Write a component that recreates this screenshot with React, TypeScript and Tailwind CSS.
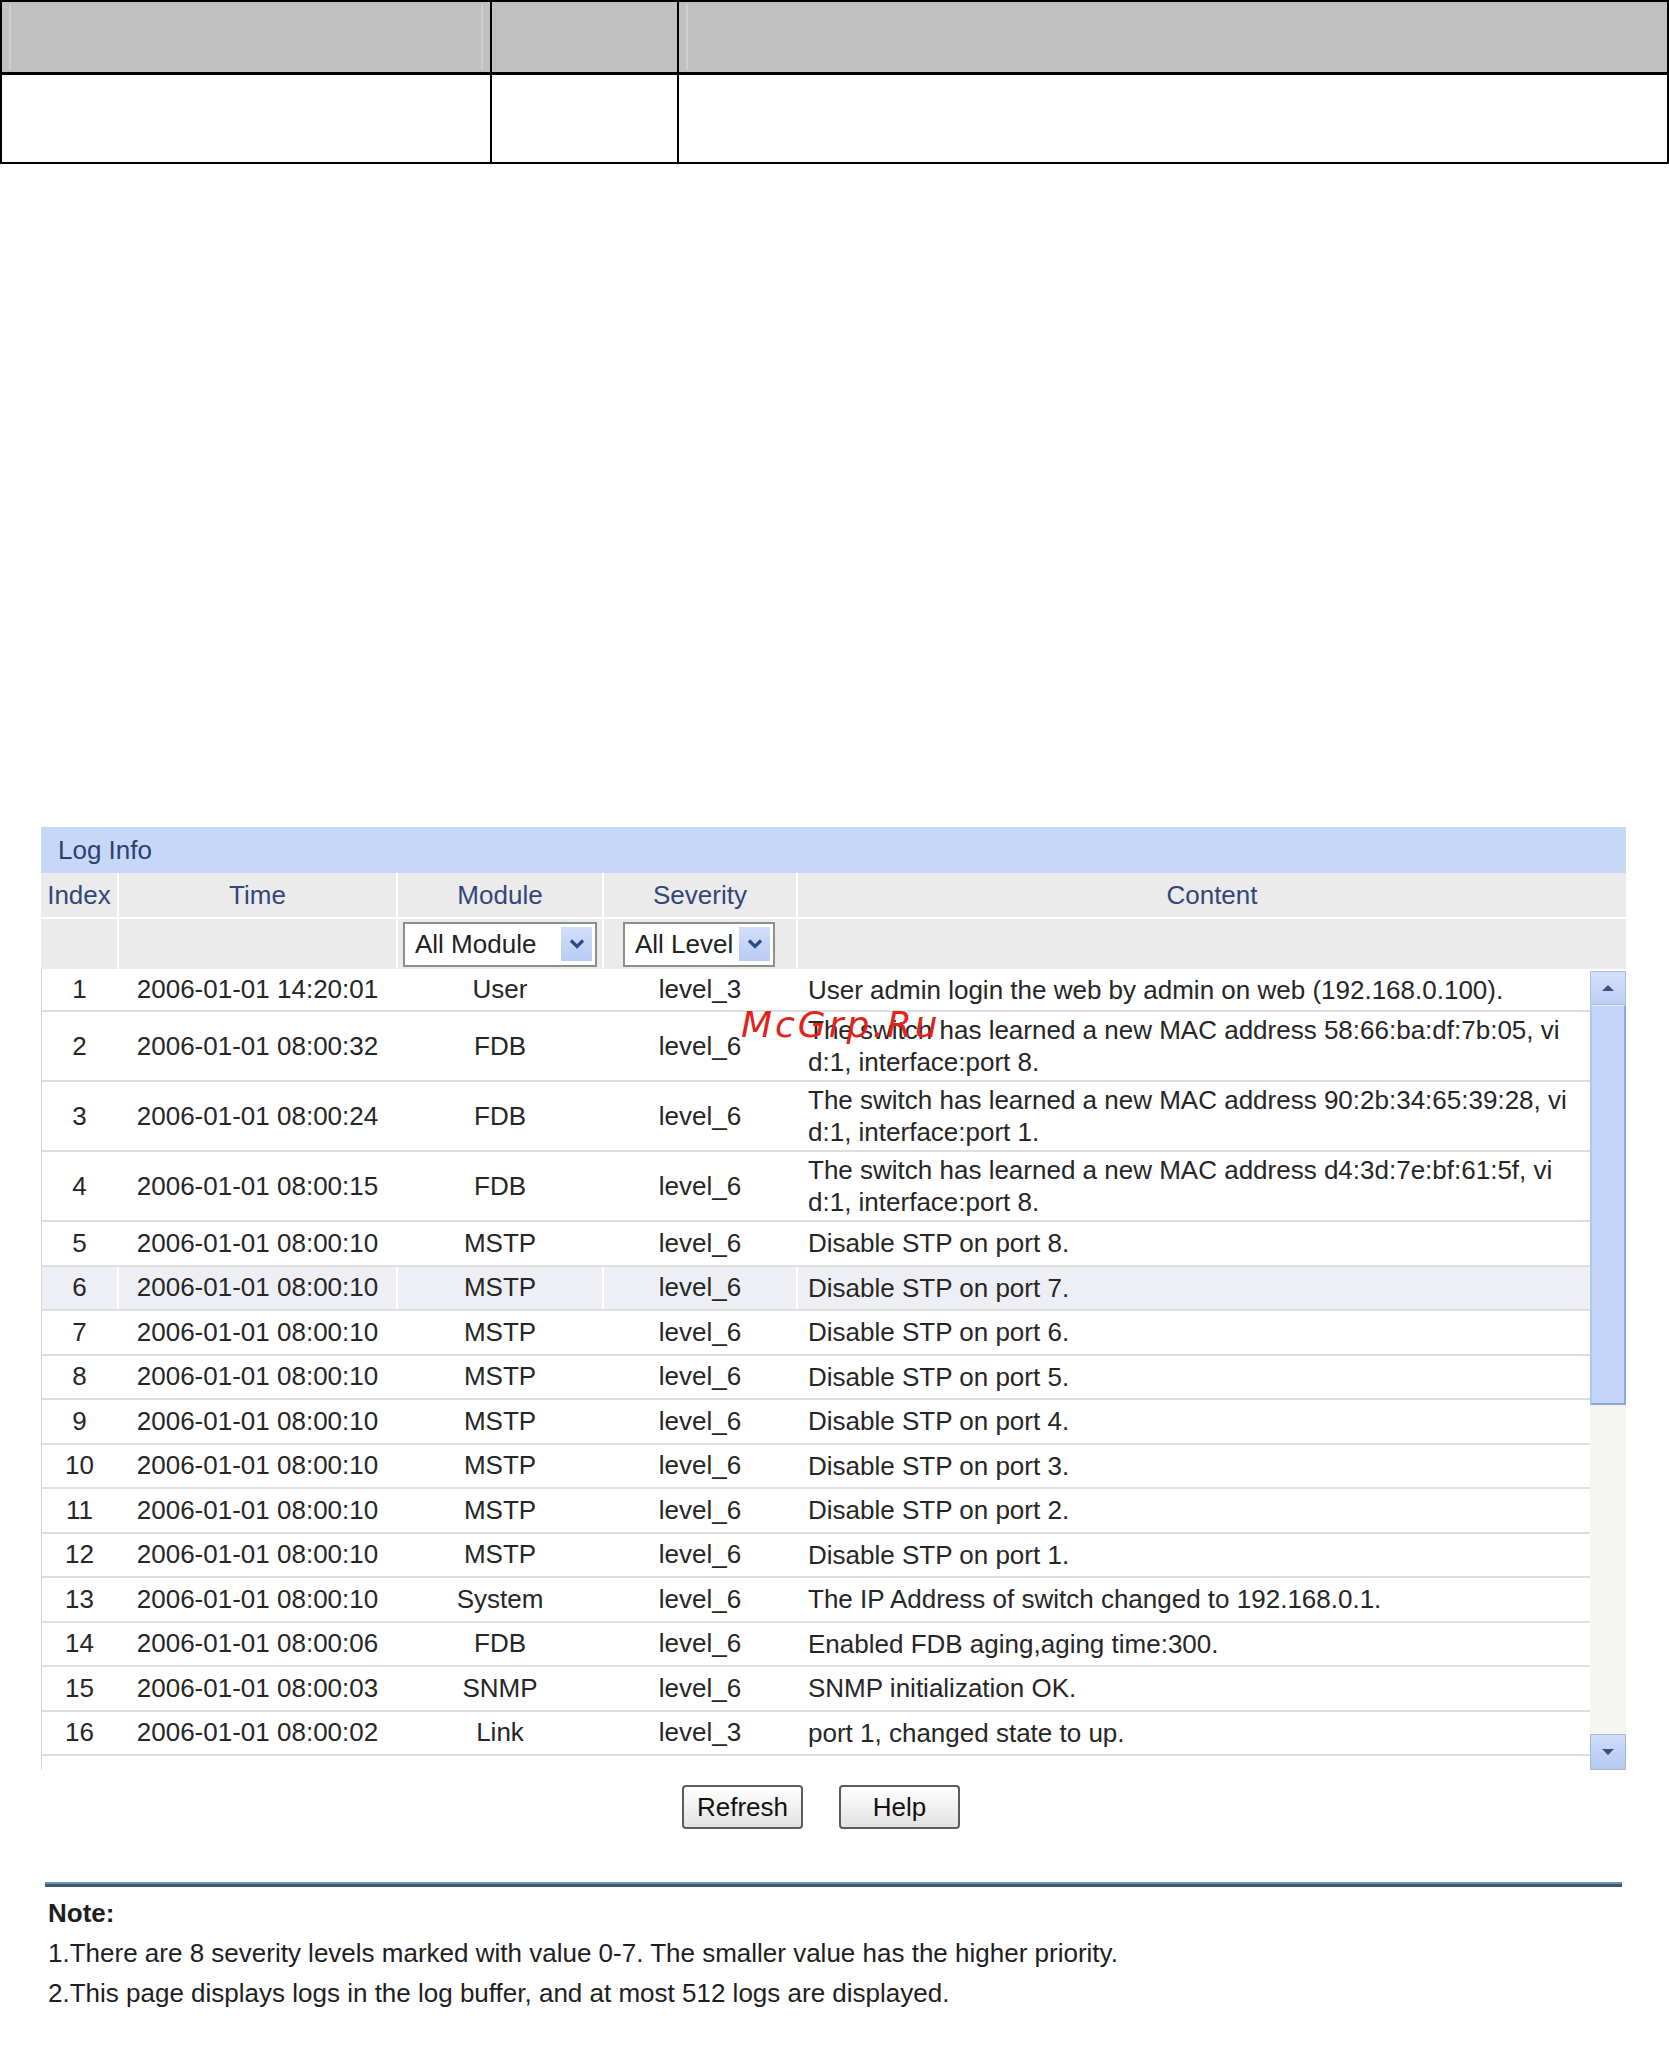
import React from 'react';

type LogRow = {
  index: number;
  time: string;
  module: string;
  severity: string;
  content: string[];
  height: string;
  highlight?: boolean;
};

const logs: LogRow[] = [
  { index: 1, time: '2006-01-01 14:20:01', module: 'User', severity: 'level_3', content: ['User admin login the web by admin on web (192.168.0.100).'], height: 'h-[43px]' },
  { index: 2, time: '2006-01-01 08:00:32', module: 'FDB', severity: 'level_6', content: ['The switch has learned a new MAC address 58:66:ba:df:7b:05, vi', 'd:1, interface:port 8.'], height: 'h-[70px]' },
  { index: 3, time: '2006-01-01 08:00:24', module: 'FDB', severity: 'level_6', content: ['The switch has learned a new MAC address 90:2b:34:65:39:28, vi', 'd:1, interface:port 1.'], height: 'h-[70px]' },
  { index: 4, time: '2006-01-01 08:00:15', module: 'FDB', severity: 'level_6', content: ['The switch has learned a new MAC address d4:3d:7e:bf:61:5f, vi', 'd:1, interface:port 8.'], height: 'h-[70px]' },
  { index: 5, time: '2006-01-01 08:00:10', module: 'MSTP', severity: 'level_6', content: ['Disable STP on port 8.'], height: 'h-[44.5px]' },
  { index: 6, time: '2006-01-01 08:00:10', module: 'MSTP', severity: 'level_6', content: ['Disable STP on port 7.'], height: 'h-[44.5px]', highlight: true },
  { index: 7, time: '2006-01-01 08:00:10', module: 'MSTP', severity: 'level_6', content: ['Disable STP on port 6.'], height: 'h-[44.5px]' },
  { index: 8, time: '2006-01-01 08:00:10', module: 'MSTP', severity: 'level_6', content: ['Disable STP on port 5.'], height: 'h-[44.5px]' },
  { index: 9, time: '2006-01-01 08:00:10', module: 'MSTP', severity: 'level_6', content: ['Disable STP on port 4.'], height: 'h-[44.5px]' },
  { index: 10, time: '2006-01-01 08:00:10', module: 'MSTP', severity: 'level_6', content: ['Disable STP on port 3.'], height: 'h-[44.5px]' },
  { index: 11, time: '2006-01-01 08:00:10', module: 'MSTP', severity: 'level_6', content: ['Disable STP on port 2.'], height: 'h-[44.5px]' },
  { index: 12, time: '2006-01-01 08:00:10', module: 'MSTP', severity: 'level_6', content: ['Disable STP on port 1.'], height: 'h-[44.5px]' },
  { index: 13, time: '2006-01-01 08:00:10', module: 'System', severity: 'level_6', content: ['The IP Address of switch changed to 192.168.0.1.'], height: 'h-[44.5px]' },
  { index: 14, time: '2006-01-01 08:00:06', module: 'FDB', severity: 'level_6', content: ['Enabled FDB aging,aging time:300.'], height: 'h-[44.5px]' },
  { index: 15, time: '2006-01-01 08:00:03', module: 'SNMP', severity: 'level_6', content: ['SNMP initialization OK.'], height: 'h-[44.5px]' },
  { index: 16, time: '2006-01-01 08:00:02', module: 'Link', severity: 'level_3', content: ['port 1, changed state to up.'], height: 'h-[44.5px]' },
];

function Chevron() {
  return (
    <svg width="16" height="12" viewBox="0 0 16 12">
      <path d="M2 2.5 L8 8.5 L14 2.5" fill="none" stroke="#2f4a86" strokeWidth="3.2" />
    </svg>
  );
}

function SelectBox({ label, width }: { label: string; width: string }) {
  return (
    <div className={`${width} h-[45px] border-2 border-[#8d8d8d] bg-white flex items-center justify-between pl-[10px] pr-[3px]`}>
      <span className="text-[#222]">{label}</span>
      <div className="w-[31px] h-[34px] bg-gradient-to-b from-[#d2dffa] to-[#b8cbf1] flex items-center justify-center">
        <Chevron />
      </div>
    </div>
  );
}

function Arrow({ up }: { up: boolean }) {
  return (
    <svg width="14" height="8" viewBox="0 0 14 8">
      <path d={up ? 'M1 7 L7 1 L13 7 Z' : 'M1 1 L7 7 L13 1 Z'} fill="#3b4f82" />
    </svg>
  );
}

function TopTable() {
  return (
    <div className="w-[1669px] border-2 border-black">
      <div className="flex h-[73px] bg-[#c0c0c0] border-b-[3px] border-black">
        <div className="w-[490px] border-r-2 border-black flex px-[7px] py-[2px]">
          <div className="flex-1 border-l-2 border-r-2 border-[#cfcfcf]" />
        </div>
        <div className="w-[187px] border-r-2 border-black" />
        <div className="flex-1 flex pl-[7px] py-[2px]">
          <div className="flex-1 border-l-2 border-[#cfcfcf]" />
        </div>
      </div>
      <div className="flex h-[87px]">
        <div className="w-[490px] border-r-2 border-black" />
        <div className="w-[187px] border-r-2 border-black" />
        <div className="flex-1" />
      </div>
    </div>
  );
}

export default function App() {
  return (
    <div className="relative w-[1669px] h-[2048px] bg-white overflow-hidden text-[26px] font-['Liberation_Sans',Arial,sans-serif]">
      <TopTable />

      <div className="ml-[41px] mt-[663px] w-[1585px]">
        {/* title */}
        <div className="h-[46px] bg-[#c6d8f7] flex items-center pl-[17px] text-[#2d3f72]">Log Info</div>

        {/* column header */}
        <div className="flex h-[46px] bg-[#ebebeb] border-b-2 border-white text-[#33467a]">
          <div className="w-[78px] border-r-2 border-white flex items-center justify-center">Index</div>
          <div className="w-[279px] border-r-2 border-white flex items-center justify-center">Time</div>
          <div className="w-[206px] border-r-2 border-white flex items-center justify-center">Module</div>
          <div className="w-[194px] border-r-2 border-white flex items-center justify-center">Severity</div>
          <div className="flex-1 flex items-center justify-center">Content</div>
        </div>

        {/* filters */}
        <div className="flex h-[50px] bg-[#ebebeb]">
          <div className="w-[78px] border-r-2 border-white" />
          <div className="w-[279px] border-r-2 border-white" />
          <div className="w-[206px] border-r-2 border-white flex items-center pl-[5px]">
            <SelectBox label="All Module" width="w-[194px]" />
          </div>
          <div className="w-[194px] border-r-2 border-white flex items-center pl-[19px]">
            <SelectBox label="All Level" width="w-[152px]" />
          </div>
          <div className="flex-1" />
        </div>

        {/* rows + scrollbar */}
        <div className="flex h-[801px]">
          <div className="flex-1 border-l border-[#d4d4d4] text-[#262626]">
            {logs.map((r) => (
              <div key={r.index} className={`flex ${r.height} border-b-2 border-[#dedede] ${r.highlight ? 'bg-[#eeeff5]' : 'bg-white'}`}>
                <div className="w-[77px] border-r-2 border-white flex items-center justify-center">{r.index}</div>
                <div className="w-[279px] border-r-2 border-white flex items-center justify-center">{r.time}</div>
                <div className="w-[206px] border-r-2 border-white flex items-center justify-center">{r.module}</div>
                <div className="w-[194px] border-r-2 border-white flex items-center justify-center">{r.severity}</div>
                <div className="flex-1 flex flex-col justify-center pl-[10px] leading-[32px]">
                  {r.content.map((line, i) => (
                    <span key={i} className="whitespace-nowrap">{line}</span>
                  ))}
                </div>
              </div>
            ))}
          </div>
          <div className="w-[36px] flex flex-col pt-[2px]">
            <div className="h-[34px] bg-gradient-to-b from-[#d4e1fa] to-[#bccff3] border border-[#a9bde6] flex items-center justify-center">
              <Arrow up />
            </div>
            <div className="h-[400px] bg-[#c4d6f7] border-l-2 border-r-2 border-t border-b-2 border-l-[#b3c6ec] border-r-[#8ea6d8] border-t-[#e2ebfb] border-b-[#8ea6d8]" />
            <div className="flex-1 bg-[#f5f5f2]" />
            <div className="h-[36px] bg-gradient-to-b from-[#cddcf8] to-[#b6caf1] border border-[#a2b7e2] flex items-center justify-center">
              <Arrow up={false} />
            </div>
          </div>
        </div>

        {/* buttons */}
        <div className="flex gap-[36px] pt-[15px] pl-[641px]">
          <button className="w-[121px] h-[44px] border-2 border-[#5c5c5c] rounded-[4px] bg-gradient-to-b from-white to-[#e2e2e2] text-[#111]">Refresh</button>
          <button className="w-[121px] h-[44px] border-2 border-[#5c5c5c] rounded-[4px] bg-gradient-to-b from-white to-[#e2e2e2] text-[#111]">Help</button>
        </div>

        {/* note */}
        <div className="mt-[53px] ml-[4px] w-[1577px] h-[5px] bg-[#3c5a78] border-t-2 border-[#6f94b0]" />
        <div className="mt-[6px] pl-[7px] leading-[40px] text-[#1e1e1e]">
          <div className="font-bold">Note:</div>
          <div>1.There are 8 severity levels marked with value 0-7. The smaller value has the higher priority.</div>
          <div>2.This page displays logs in the log buffer, and at most 512 logs are displayed.</div>
        </div>
      </div>

      {/* watermark */}
      <div className="absolute left-[741px] top-[1007px] text-[36px] leading-none italic tracking-[3px] text-[#e2231a] font-['DejaVu_Sans',sans-serif] pointer-events-none">
        McGrp.Ru
      </div>
    </div>
  );
}
